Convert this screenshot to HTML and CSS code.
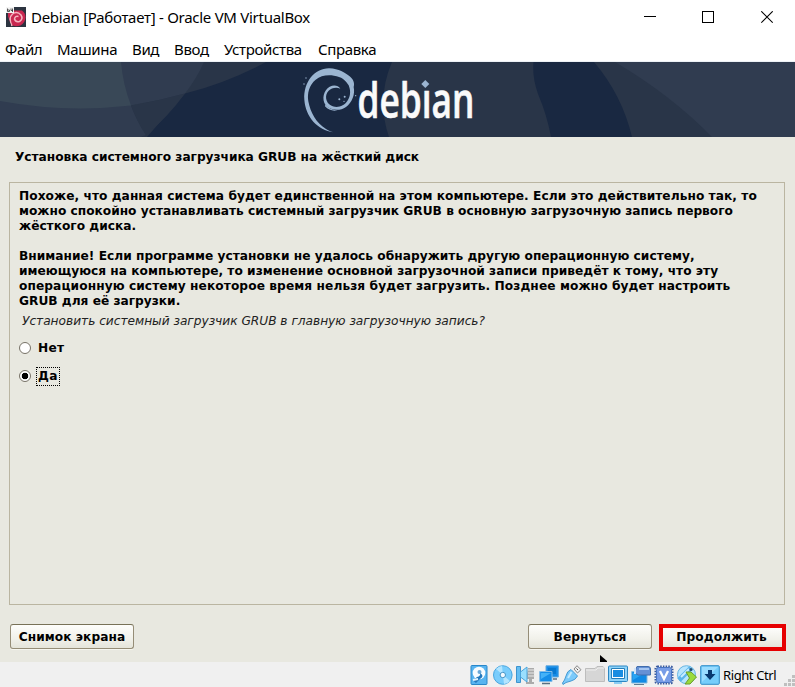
FILE: index.html
```html
<!DOCTYPE html>
<html lang="ru">
<head>
<meta charset="utf-8">
<title>Debian [Работает] - Oracle VM VirtualBox</title>
<link rel="stylesheet" href="styles.css">
</head>
<body>
<div class="window">
  <header class="titlebar">
    <svg class="app-icon" width="20" height="20" viewBox="0 0 20 20">
      <rect width="20" height="20" fill="#2c3440"/>
      <path d="M2 6L7 3.500H16Q19.500 6 19.500 10.500Q19 16 14.500 18.500Q9 20 5 18Q2 14 2 9Z" fill="#c92750"/>
      <path d="M6 19Q2 11 6.500 7Q11 3.500 15 8Q17.500 12 13.500 14.500Q9.500 15.500 8.500 12Q9 8.500 12.500 9.500" fill="none" stroke="#f5b3bf" stroke-width="1.500"/>
      <path d="M1 7L5 18L2 20H0V7Z" fill="#2c3440"/>
      <rect width="8" height="6" fill="#f4f4f4"/>
      <path d="M1.500 1.500V4.500H3.500V3H1.500M5 1.500V3.500H7M6.500 1.500V5" fill="none" stroke="#333" stroke-width=".8"/>
    </svg>
    <h1 class="title">Debian [Работает] - Oracle VM VirtualBox</h1>
    <div class="controls">
      <svg width="12" height="13" viewBox="0 0 12 13"><path d="M0 5.500H12" stroke="#000"/></svg>
      <svg width="12" height="13" viewBox="0 0 12 13"><rect x=".5" y=".5" width="11" height="11" fill="none" stroke="#000"/></svg>
      <svg class="close" width="12" height="13" viewBox="0 0 12 13"><path d="M.3 .3L11.700 11.700M11.700 .3L.3 11.700" stroke="#000" stroke-width="1.100"/></svg>
    </div>
  </header>
  <nav class="menu">
    <span class="m1">Файл</span><span class="m2">Машина</span><span class="m3">Вид</span><span class="m4">Ввод</span><span class="m5">Устройства</span><span class="m6">Справка</span>
  </nav>
  <svg class="banner" width="795" height="75" viewBox="0 0 795 75">
    <rect width="795" height="75" fill="#192841"/>
    <path d="M0 0H266Q227 21 185 31.500Q167 52 147 75H0Z" fill="#293548"/>
    <path d="M0 0H204Q197 16 185 31.500Q158 39 131 43.500Q137 60 146 73L140 75H0Z" fill="#303c50"/>
    <path d="M131 43.500Q158 39 185 31.500Q167 56 146 73Q137 59 131 43.500Z" fill="#293548"/>
    <path d="M0 0H121Q123 23 131 43.500Q65 51 0 39Z" fill="#394857"/>
    <path d="M392 0H533.500Q532 15 538 32Q547 53 551 75H389Q376 37 392 0Z" fill="#293548"/>
    <path d="M594 0H795V75H632Q622 33 594 0Z" fill="#293548"/>
    <path d="M615 0H795V75H712Q671 33 615 0Z" fill="#303c50"/>
    <g transform="translate(290 -2) scale(.3333)" fill="#9bb5d1">
      <path d="M131 217C82 210 47 171 43 119C40 66 75 24 118 25C147 26 165 39 178 48C190 57 195 70 191 81C196 103 186 128 168 141C149 155 119 151 107 136C94 116 101 91 119 80C133 73 145 77 151 86C139 80 124 84 116 92C103 105 107 127 122 136C140 147 162 138 172 123C183 107 182 91 176 76C168 62 154 49 132 47C111 44 91 47 77 59C58 75 51 99 55 124C61 157 79 190 107 206C115 212 123 215 131 217Z"/>
      <path d="M105 139Q121 156 143 151Q123 151 105 134Z"/>
      <circle cx="148" cy="118" r="3"/><circle cx="164" cy="110" r="3"/><circle cx="162" cy="124" r="2"/><circle cx="48" cy="54" r="2"/><circle cx="42" cy="72" r="2"/><circle cx="197" cy="107" r="2"/>
    </g>
    <text class="wordmark" x="357.500" y="56" textLength="117" lengthAdjust="spacingAndGlyphs">debian</text>
    <rect x="421" y="17" width="9" height="10.500" fill="#293548"/>
    <path d="M425.300 18L429.300 22L425.300 26L421.300 22Z" fill="#9bb5d1"/>
  </svg>
  <main class="installer">
    <h2 class="heading">Установка системного загрузчика GRUB на жёсткий диск</h2>
    <section class="panel">
      <p class="para"><span class="wide">Похоже, что данная система будет единственной на этом компьютере. Если это действительно так, то</span><br>можно спокойно устанавливать системный загрузчик GRUB в основную загрузочную запись первого<br>жёсткого диска.</p>
      <p class="para"><span class="medium">Внимание! Если программе установки не удалось обнаружить другую операционную систему,<br>имеющуюся на компьютере, то изменение основной загрузочной записи приведёт к тому, что эту</span><br><span class="loose">операционную систему некоторое время нельзя будет загрузить. Позднее можно будет настроить</span><br>GRUB для её загрузки.</p>
      <p class="question">Установить системный загрузчик GRUB в главную загрузочную запись?</p>
      <div class="option"><i class="radio"></i><span class="label">Нет</span></div>
      <div class="option"><i class="radio checked"></i><span class="label focused">Да</span></div>
    </section>
    <footer class="actions">
      <button class="btn">Снимок экрана</button>
      <button class="btn back">Вернуться</button>
      <div class="highlight"><button class="btn">Продолжить</button></div>
    </footer>
    <svg class="pointer" width="8" height="7" viewBox="0 0 8 7"><path d="M0 0L7 6V7H0Z" fill="#000"/></svg>
  </main>
  <div class="status">
    <svg viewBox="0 0 20 20"><rect x="1" y=".5" width="16" height="19" rx="1" fill="#58b4f0" stroke="#2987c9"/><circle cx="9" cy="8" r="6.300" fill="#f8fcff"/><circle cx="9.500" cy="7" r="2" fill="#6aa8d8"/><path d="M10 8Q15 11 10 14L6 18L3 15.500L7 12Q11 11 10 8Z" fill="#2479bd"/><path d="M3 15L8 14" stroke="#e1f4ff" stroke-width="2"/></svg>
    <svg viewBox="0 0 20 20"><circle cx="9.800" cy="10" r="9.300" fill="#79cdfc" stroke="#47a5df"/><path d="M10 10L3 4A9 9 0 0 1 9 1ZM10 10L17 16A9 9 0 0 1 11 19Z" fill="#b3e5ff"/><circle cx="9.800" cy="10" r="2.700" fill="#f4faff" stroke="#4796c8"/></svg>
    <svg viewBox="0 0 20 20"><path d="M12 3H18V14H16V17H18V19H10V17H13V14H10Z" fill="#ababab"/><path d="M12 5H19M12 8H19M12 11H19" stroke="#e8e8e8"/><path d="M.5 1.500H4.500V17.500H.5Z" fill="#64bdf2" stroke="#3c94cf"/><path d="M4.500 7L11 2V17L4.500 12Z" fill="#9adfff" stroke="#4ca4da"/></svg>
    <svg viewBox="0 0 20 20"><path d="M7 .8H19.300V12H7Z" fill="#148be7" stroke="#62a9df"/><path d="M9 3H17V9H9Z" fill="#0878d0"/><path d="M.7 6.500H13V16.500H.7Z" fill="#148ee9" stroke="#83bce7"/><path d="M2 8H12L2 14Z" fill="#43b2f8"/><path d="M3 18.500H11M14 14H18" stroke="#596f81" stroke-width="1.500"/></svg>
    <svg viewBox="0 0 20 20"><path d="M12 4L15 .7L19 4.700L15.500 8Z" fill="#eee" stroke="#888"/><path d="M14.500 3.500L16 5" stroke="#555"/><path d="M9 4.500L15.500 11Q13.500 15 9 16L4 17.500L1 19.500L.5 18L2.500 15L4 11Q5 6 9 4.500Z" fill="#7bcafb" stroke="#479ad2"/><path d="M9.500 7L6 13" stroke="#c3eaff" stroke-width="2"/></svg>
    <svg viewBox="0 0 20 20"><path d="M.5 16.500V3.500H10L12 1.500H18L19.500 3.500V16.500Z" fill="#d6d6d6" stroke="#bdbdbd"/><path d="M1 5H11L13 3H19" fill="none" stroke="#ededed"/></svg>
    <svg viewBox="0 0 20 20"><rect x=".5" y="1" width="19" height="15.500" rx="1" fill="#8dd3fa" stroke="#2c87c3"/><path d="M3.500 3.500H16.500V13.500H3.500Z" fill="#fff" stroke="#267eba"/><path d="M5 5H15V12H5Z" fill="#198de2"/><path d="M6 18H14" stroke="#8ccdf3" stroke-width="2"/></svg>
    <svg viewBox="0 0 20 20"><path d="M.7 6.500H16V18H.7Z" fill="#118ae5" stroke="#83badf"/><path d="M2 8H14L2 15Z" fill="#29a4f3"/><path d="M3 19.500H13" stroke="#607d92"/><path d="M6 1.500H17Q19.500 1.500 19.500 4V10H7Q4 9 4 6Z" fill="#6590d5" stroke="#416dac"/><path d="M8 4H18" stroke="#a6c6f1" stroke-width="2"/><path d="M4 3V9" stroke="#d1e4fb" stroke-width="2"/></svg>
    <svg viewBox="0 0 20 20"><rect x="1.500" y="1.500" width="17" height="17" rx="2" fill="none" stroke="#38599d" stroke-width="2" stroke-dasharray="1.500 1.200"/><rect x="2.500" y="2.500" width="15" height="15" rx="2" fill="#789de7" stroke="#4773c2"/><path d="M6 6L10 14L14 6" fill="none" stroke="#fff" stroke-width="2.300"/></svg>
    <svg viewBox="0 0 20 20"><circle cx="9.500" cy="9.700" r="9" fill="#b7e5ff" stroke="#65b4e2"/><path d="M2 15L14 3" stroke="#5ab4ec" stroke-width="5"/><path d="M4 12L12 4" stroke="#c8edff" stroke-width="2"/><circle cx="14" cy="4.500" r="1.500" fill="#244e70"/><path d="M9 7H14L19.500 12L13 19H8L12.500 13Z" fill="#9adb3c" stroke="#6a9d2d"/></svg>
    <svg viewBox="0 0 20 20"><rect x=".7" y=".7" width="18.600" height="18.600" rx="1" fill="#75cdfb" stroke="#318dc7"/><path d="M2 2H18L2 17Z" fill="#99dcff"/><path d="M8 5H12V9H15.500L10 15L4.500 9H8Z" fill="#093a70"/></svg>
    <span class="hostkey">Right Ctrl</span>
    <svg class="grip" viewBox="0 0 11 11"><path d="M8 0H11V3H8ZM4 4H7V7H4ZM8 4H11V7H8ZM0 8H3V11H0ZM4 8H7V11H4ZM8 8H11V11H8Z" fill="#bfbfbf"/></svg>
  </div>
</div>
</body>
</html>
```

FILE: styles.css
```css
* { box-sizing: border-box; }
body { margin: 0; background: #fff; color: #000; }
.window { width: 795px; height: 687px; display: flex; flex-direction: column; overflow: hidden; }
.titlebar { height: 36px; display: flex; align-items: center; padding: 0 22px 2px 6px; }
.app-icon { flex: none; }
.title { margin: 0 auto 0 5px; font: 400 15px/20px "Noto Sans", sans-serif; letter-spacing: -.28px; white-space: nowrap; }
.controls { display: flex; gap: 46px; }
.controls svg { display: block; }
.close { margin-left: 1px; }
.menu { height: 26px; display: flex; padding: 3px 0 0 5px; font: 15px/21px "Noto Sans", sans-serif; letter-spacing: -.35px; white-space: nowrap; border-bottom: 1px solid #edf1f5; }
.menu span { flex: none; }
.m1 { width: 52px; }
.m2 { width: 75px; }
.m3 { width: 42px; }
.m4 { width: 50px; }
.m5 { width: 94px; }
.banner { display: block; flex: none; }
.wordmark { font: 600 48px "Open Sans", sans-serif; fill: #fafafa; stroke: #fafafa; stroke-width: .6; }
.installer { position: relative; height: 525px; flex: none; background: #e8e8e0; padding: 11px 10px 0 9px; font: 700 12.2px/15px "DejaVu Sans", sans-serif; display: flex; flex-direction: column; }
.heading { margin: 0; padding: 2px 0 0 6px; height: 34px; font: inherit; letter-spacing: -.04px; white-space: nowrap; }
.panel { height: 423px; border: 1px solid #bab5a1; padding: 6px 9px; white-space: nowrap; }
.para { margin: 0 0 15px; }
.wide { letter-spacing: .05px; }
.medium { letter-spacing: .02px; }
.loose { letter-spacing: .085px; }
.question { margin: -10px 0 9px 3px; font-weight: 400; font-style: oblique; letter-spacing: -.02px; color: #222; }
.option { display: flex; align-items: center; height: 20px; margin-bottom: 8px; }
.radio { width: 12px; height: 12px; border-radius: 50%; border: 1px solid #777267; background: #fff; }
.radio.checked { background: radial-gradient(circle, #000 0 3px, #fff 3.600px); }
.label { margin-left: 5px; height: 19px; padding: 1px; border: 1px solid transparent; letter-spacing: .3px; }
.focused { min-width: 24px; border: 1px dotted #000; }
.actions { display: flex; align-items: flex-start; padding: 19px 0 0 1px; }
.btn { display: block; width: 124px; height: 25px; padding: 2px 0 0; border: 1px solid #958d77; border-top-color: #777157; border-radius: 3px; background: linear-gradient(#fdfdfb, #f1f1ea 60%, #e4e4da); color: #000; font: inherit; letter-spacing: .04px; box-shadow: 0 1px 0 #f6f6f0; }
.back { margin-left: auto; }
.highlight { width: 127px; height: 27px; margin: 0 -1px 0 7px; border: 4px solid #e60000; overflow: hidden; }
.highlight .btn { width: 119px; height: 19px; padding: 0 2px 0 0; border: 0; border-radius: 0; }
.pointer { position: absolute; left: 600px; top: 518px; }
.status { height: 25px; background: #f0f0f0; display: flex; align-items: center; padding-left: 470px; }
.status svg { width: 20px; height: 20px; margin-right: 3px; flex: none; }
.hostkey { font: 13px/18px "Noto Sans", sans-serif; letter-spacing: -.4px; white-space: nowrap; width: 61px; flex: none; }
.status .grip { width: 11px; height: 11px; margin: 12px 0 0; }
```
